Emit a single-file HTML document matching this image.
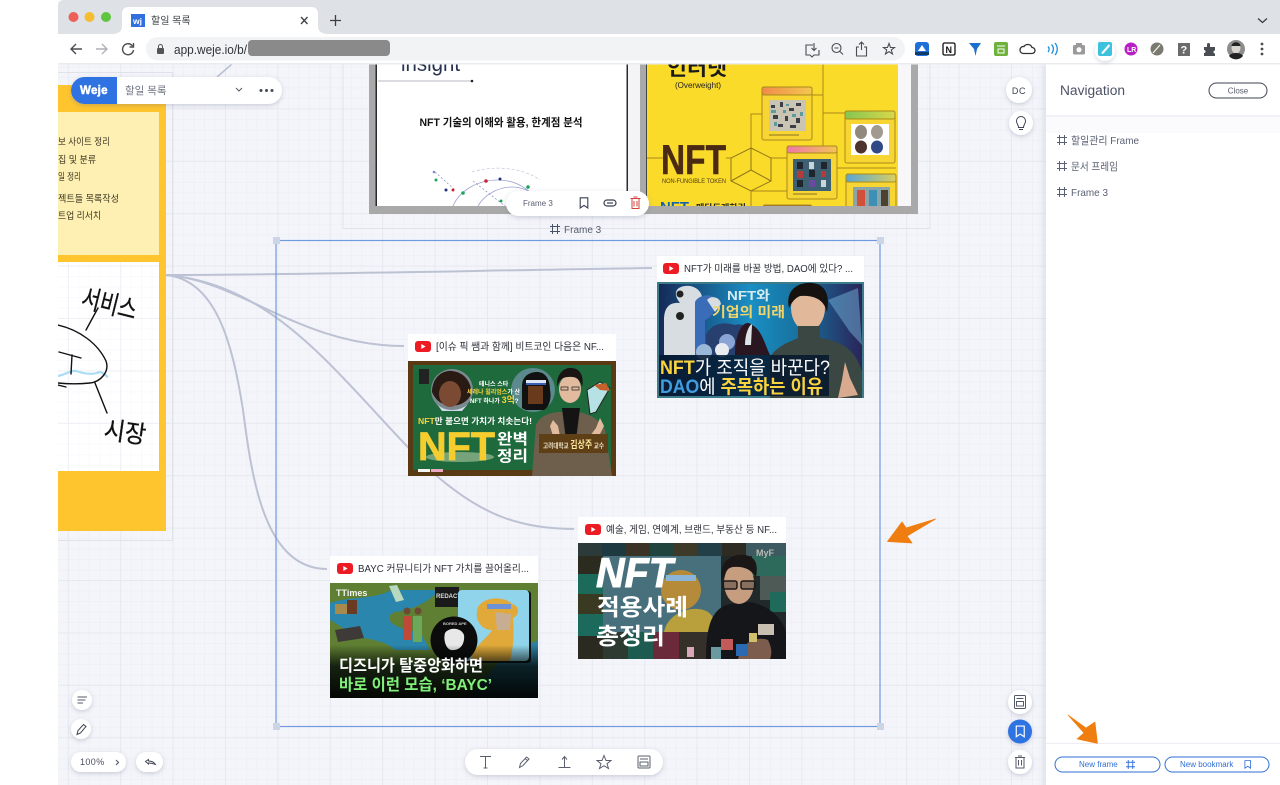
<!DOCTYPE html>
<html><head><meta charset="utf-8"><title>할일 목록</title>
<style>
html,body{margin:0;padding:0;background:#fff;width:1280px;height:785px;overflow:hidden}
svg{display:block;position:absolute;left:0;top:0;filter:blur(.35px)}
text{font-family:"Liberation Sans","Noto Sans CJK KR",sans-serif}
</style></head><body>
<svg width="1280" height="785" viewBox="0 0 1280 785" xmlns="http://www.w3.org/2000/svg">
<defs>
<pattern id="mn" x="15.4" y="3.6" width="10.48" height="10.48" patternUnits="userSpaceOnUse"><path d="M.5 0V10.48M0 .5H10.48" stroke="#eff0f6" fill="none"/></pattern>
<pattern id="mj" x="15.4" y="3.6" width="52.4" height="52.4" patternUnits="userSpaceOnUse"><path d="M.5 0V52.4M0 .5H52.4" stroke="#e7e9f1" fill="none"/></pattern>
<filter id="sh" x="-30%" y="-50%" width="160%" height="220%"><feDropShadow dx="0" dy="1.5" stdDeviation="2.5" flood-color="#5a6080" flood-opacity=".28"/></filter>
<filter id="ps" x="-10%" y="-5%" width="115%" height="110%"><feDropShadow dx="-1" dy="0" stdDeviation="4" flood-color="#5a6080" flood-opacity=".2"/></filter>
<symbol id="fr" viewBox="0 0 10 10"><path d="M2.5 0V10M7.5 0V10M0 2.5H10M0 7.5H10" fill="none" stroke="currentColor" stroke-width="1"/></symbol>
<symbol id="bm" viewBox="0 0 10 12"><path d="M1.2 .8H8.8V11L5 8.4 1.2 11Z" fill="none" stroke="currentColor" stroke-width="1.1"/></symbol>
<symbol id="yt" viewBox="0 0 16 11"><rect width="16" height="11" rx="3" fill="#ed1c24"/><path d="M6.3 3V8L10.6 5.5Z" fill="#fff"/></symbol>
<linearGradient id="gb" x1="0" x2="1" y1="0" y2="0"><stop offset="0" stop-color="#152a58"/><stop offset=".45" stop-color="#1a8fc4"/><stop offset=".7" stop-color="#176f9c"/><stop offset="1" stop-color="#2a2458"/></linearGradient>
<linearGradient id="wo" x1="0" x2="1"><stop offset="0" stop-color="#f08b4b"/><stop offset="1" stop-color="#f5c74f"/></linearGradient>
<linearGradient id="wg" x1="0" x2="1"><stop offset="0" stop-color="#86c551"/><stop offset="1" stop-color="#d8d84a"/></linearGradient>
<linearGradient id="wp" x1="0" x2="1"><stop offset="0" stop-color="#ee78a8"/><stop offset="1" stop-color="#f4c455"/></linearGradient>
<linearGradient id="wb" x1="0" x2="1"><stop offset="0" stop-color="#5aa6d8"/><stop offset="1" stop-color="#d9cf60"/></linearGradient>
<linearGradient id="dk" x1="0" x2="0" y1="0" y2="1"><stop offset="0" stop-color="#000" stop-opacity="0"/><stop offset=".4" stop-color="#020a08" stop-opacity=".8"/><stop offset="1" stop-color="#000" stop-opacity=".95"/></linearGradient>
<clipPath id="c1"><rect x="657" y="282" width="207" height="116"/></clipPath>
<clipPath id="c2"><rect x="408" y="361" width="208" height="115"/></clipPath>
<clipPath id="c3"><rect x="578" y="543" width="208" height="116"/></clipPath>
<clipPath id="c4"><rect x="330" y="583" width="208" height="115"/></clipPath>
<clipPath id="top"><rect x="58" y="64" width="1222" height="721"/></clipPath>
<clipPath id="slides"><rect x="360" y="64" width="570" height="142"/></clipPath>
</defs>

<!-- canvas -->
<rect x="58" y="64" width="1222" height="721" fill="#f4f5fa"/>
<rect x="58" y="64" width="1222" height="721" fill="url(#mn)"/>
<rect x="58" y="64" width="1222" height="721" fill="url(#mj)"/>

<g clip-path="url(#top)">
<!-- upper frames -->
<rect x="343" y="50" width="587" height="178.500" fill="none" stroke="#e0e2ea"/>
<rect x="50" y="72.500" width="122.500" height="468" fill="none" stroke="#e0e2ea"/>
<path d="M232 64 217 77" stroke="#b9bfd2" stroke-width="1.500" fill="none"/>

<!-- slides -->
<rect x="369" y="50" width="549" height="164" fill="#a9a9a9"/>
<rect x="375.500" y="50" width="252.500" height="156" fill="#2b2b2b"/>
<rect x="377" y="50" width="249.500" height="156" fill="#fff"/>
<rect x="628" y="50" width="12" height="156" fill="#f4f4f6"/>
<rect x="646" y="50" width="1.500" height="156" fill="#444"/>
<rect x="647" y="50" width="251" height="156" fill="#fadb2a"/>
<rect x="898" y="50" width="13" height="156" fill="#f7f7f9"/>
<g clip-path="url(#slides)">
<text x="401" y="71" font-size="22" fill="#26324f" textLength="59" lengthAdjust="spacingAndGlyphs">insight</text>
<path d="M378 81H472" stroke="#b4b8c4"/><circle cx="472" cy="81" r="1.300" fill="#222"/>
<text x="501" y="126" font-size="11" font-weight="700" fill="#111" text-anchor="middle" textLength="163" lengthAdjust="spacingAndGlyphs">NFT 기술의 이해와 활용, 한계점 분석</text>
<path d="M453 206C460 190 478 180 498 180 512 180 525 186 535 197M478 206C484 195 498 187 512 187 520 187 528 190 533 194" fill="none" stroke="#9fa5cf" stroke-width=".8"/>
<path d="M435 172 455 190M473 181 505 206" stroke="#8288c4" stroke-width=".7" stroke-dasharray="2 2" fill="none"/>
<path d="M472 172C490 166 520 166 540 180" stroke="#c9cbdd" stroke-width=".8" stroke-dasharray="3 2" fill="none"/>
<g><circle cx="434" cy="172" r="1.300" fill="#8288c4"/><circle cx="436" cy="180" r="1.500" fill="#1fa35b"/><circle cx="453" cy="190" r="1.500" fill="#c8243a"/><circle cx="446" cy="190" r="1.500" fill="#23307f"/><circle cx="463" cy="193" r="1.800" fill="#1fa35b"/><circle cx="486" cy="181" r="1.800" fill="#c8243a"/><circle cx="500" cy="179" r="1.500" fill="#23307f"/><circle cx="528" cy="187" r="1.800" fill="#1fa35b"/><circle cx="501" cy="201" r="1.500" fill="#1fa35b"/></g>

<text x="667" y="75" font-size="21" font-weight="700" fill="#1a1a1a" textLength="60" lengthAdjust="spacingAndGlyphs">인터넷</text>
<text x="675" y="88" font-size="8.500" fill="#222" textLength="46" lengthAdjust="spacingAndGlyphs">(Overweight)</text>
<g fill="none" stroke="#a98a1b" stroke-width="1">
<path d="M823 64V146M823 113H845M823 95H812M751 148V114H762M771 158H787M647 158H664M726 158H731M751 191V206M837 168H896M751 191H787"/>
<path d="M751 148 771 158V181L751 191 731 181V158ZM731 181 751 170 771 181M751 170V148" stroke="#8f7518"/>
</g>
<text x="661" y="174" font-size="42" font-weight="700" fill="#4b2a14" stroke="#4b2a14" stroke-width=".5" textLength="65" lengthAdjust="spacingAndGlyphs">NFT</text>
<text x="662" y="183" font-size="6.500" fill="#4b3a18" textLength="64" lengthAdjust="spacingAndGlyphs">NON-FUNGIBLE TOKEN</text>
<text x="660" y="212" font-size="15" font-weight="700" fill="#1464b0" textLength="29" lengthAdjust="spacingAndGlyphs">NFT</text>
<text x="696" y="210" font-size="8" font-weight="700" fill="#222" textLength="50" lengthAdjust="spacingAndGlyphs">메타도래하리</text>
<!-- windows -->
<g stroke="#a98a1b" stroke-width="1">
<rect x="762" y="87" width="50" height="53" rx="2" fill="#f7d634"/><rect x="762" y="87" width="50" height="8" rx="2" fill="url(#wo)"/>
<rect x="845" y="111" width="50" height="52" rx="2" fill="#f7d634"/><rect x="845" y="111" width="50" height="8" rx="2" fill="url(#wg)"/>
<rect x="787" y="146" width="50" height="53" rx="2" fill="#f7d634"/><rect x="787" y="146" width="50" height="7" rx="2" fill="url(#wp)"/>
<rect x="846" y="174" width="50" height="40" rx="2" fill="#f7d634"/><rect x="846" y="174" width="50" height="8" rx="2" fill="url(#wb)"/>
<rect x="763" y="205" width="49" height="10" rx="2" fill="#a06a3a"/>
</g>
<rect x="769" y="100" width="37" height="31" fill="#c9c4b4"/>
<path d="M771 105h4v3h-4zM780 102h3v5h-3zM789 108h5v3h-5zM773 115h5v4h-5zM785 116h3v5h-3zM796 103h5v3h-5zM796 118h4v5h-4zM778 124h5v3h-5zM790 125h6v3h-6z" fill="#3c3f45"/>
<path d="M771 110h5v3h-5zM783 110h3v3h-3zM792 114h4v3h-4zM774 122h3v4h-3zM800 112h3v4h-3zM786 104h3v2h-3z" fill="#5d9aa0"/>
<rect x="769" y="134" width="30" height="2" fill="#c1a22a"/>
<rect x="851" y="124" width="38" height="31" fill="#fff"/>
<ellipse cx="861" cy="132" rx="6" ry="7" fill="#90897e"/><ellipse cx="877" cy="132" rx="6" ry="7" fill="#a09a90"/><ellipse cx="861" cy="147" rx="6" ry="6.500" fill="#4e342c"/><ellipse cx="877" cy="147" rx="6" ry="6.500" fill="#2f4a86"/>
<rect x="793" y="159" width="38" height="32" fill="#3d6072"/>
<g fill="#20242c"><rect x="797" y="162" width="6" height="7"/><rect x="809" y="170" width="6" height="7"/><rect x="821" y="162" width="6" height="7"/><rect x="797" y="180" width="6" height="7"/></g>
<g fill="#c9d6d8"><rect x="809" y="162" width="5" height="7"/><rect x="821" y="180" width="5" height="7"/></g>
<g fill="#b53a3a"><rect x="797" y="171" width="6" height="7"/><rect x="821" y="171" width="5" height="6"/></g>
<rect x="809" y="180" width="6" height="7" fill="#6a4aa0"/>
<rect x="793" y="193" width="24" height="2" fill="#c1a22a"/>
<rect x="853" y="187" width="37" height="20" fill="#8aa4a8"/>
<rect x="857" y="190" width="8" height="18" fill="#d2503a"/><rect x="869" y="190" width="8" height="18" fill="#3d8fb5"/><rect x="881" y="190" width="7" height="18" fill="#50402f"/>
</g>
<rect x="647" y="206" width="251" height="8" fill="#a9a9a9"/>

<!-- sticky -->
<rect x="58" y="85" width="108" height="446" fill="#fec52e"/>
<rect x="58" y="112" width="101" height="143" fill="#fdf0b2"/>
<g font-size="9.500" fill="#3a3520">
<text x="58" y="145" textLength="52" lengthAdjust="spacingAndGlyphs">보 사이트 정리</text>
<text x="58" y="163" textLength="38" lengthAdjust="spacingAndGlyphs">집 및 분류</text>
<text x="58" y="180" textLength="23" lengthAdjust="spacingAndGlyphs">일 정리</text>
<text x="58" y="202" textLength="61" lengthAdjust="spacingAndGlyphs">젝트들 목록작성</text>
<text x="58" y="219" textLength="43" lengthAdjust="spacingAndGlyphs">트업 리서치</text>
</g>
<rect x="58" y="262" width="101" height="209" fill="#fff"/>
<rect x="58" y="262" width="101" height="209" fill="url(#mn)" opacity=".35"/>
<rect x="58" y="262" width="101" height="209" fill="url(#mj)" opacity=".6"/>
<path d="M58 376C65 375 70 370 76 371 82 373 90 375 97 373 102 370 104 375 108 377" stroke="#a8dcf5" stroke-width="2.200" fill="none"/>
<g stroke="#111" stroke-width="1.400" fill="none" stroke-linecap="round">
<path d="M58 325C80 330 98 344 106 361 110 372 100 382 90 383 80 384 68 384 58 383"/>
<path d="M98 308 86 330M95 383 107 413M59 352 81 358M72 355 71 374M58 385 66 387"/>
</g>
<text x="80" y="306" font-size="26" fill="#111" stroke="#111" stroke-width=".3" transform="rotate(14 80 306)" textLength="56" lengthAdjust="spacingAndGlyphs">서비스</text>
<text x="103" y="438" font-size="25" fill="#111" stroke="#111" stroke-width=".3" transform="rotate(8 103 438)" textLength="42" lengthAdjust="spacingAndGlyphs">시장</text>

<!-- connectors -->
<g fill="none" stroke="#bcc2d4" stroke-width="2">
<path d="M166 275C300 275 500 270 652 268"/>
<path d="M166 275C240 280 300 346 404 346"/>
<path d="M166 275C280 285 340 380 430 470 480 515 520 529 574 529"/>
<path d="M166 275C215 280 232 340 243 410 252 480 265 569 327 569"/>
</g>

<!-- frame 3 selection -->
<rect x="276" y="240.500" width="604" height="486" fill="none" stroke="#6f9ae0" stroke-width="1.200"/>
<g fill="#ccd5e6"><rect x="273" y="237" width="7" height="7"/><rect x="877" y="237" width="7" height="7"/><rect x="273" y="723" width="7" height="7"/><rect x="877" y="723" width="7" height="7"/></g>
<use href="#fr" x="550" y="224" width="10" height="10" color="#4c5266"/>
<text x="564" y="233" font-size="10" fill="#555b6e">Frame 3</text>

<!-- Card 1 -->
<rect x="657" y="256" width="207" height="26" fill="#fff"/>
<use href="#yt" x="663" y="263" width="16" height="11"/>
<text x="684" y="272" font-size="10" fill="#2c2f38" textLength="169" lengthAdjust="spacingAndGlyphs">NFT가 미래를 바꿀 방법, DAO에 있다? ...</text>
<g clip-path="url(#c1)">
<rect x="657" y="282" width="207" height="116" fill="#3c7b8a"/>
<rect x="659" y="284" width="203" height="112" fill="url(#gb)"/>
<path d="M664 355V320C664 305 672 302 680 303 670 290 680 285 690 286 702 288 705 300 700 306V355Z" fill="#d7dde0"/>
<circle cx="680" cy="316" r="4" fill="#222"/><circle cx="680" cy="294" r="3.500" fill="#222"/>
<path d="M695 355V302C698 295 712 292 716 300 718 306 712 318 705 320V355Z" fill="#3a6cb8"/>
<path d="M707 300a8 8 0 0 1 14 4l-6 8z" fill="#d7dde0"/>
<path d="M706 355V335C712 322 725 322 735 325 745 322 755 330 762 355Z" fill="#27406f"/>
<circle cx="727" cy="342" r="8" fill="#8aa5d5"/>
<path d="M735 355C735 330 745 318 752 325 762 330 765 345 770 355Z" fill="#2a1620"/>
<path d="M745 345C745 330 752 322 752 325L751 345Z" fill="#dde3e6"/>
<circle cx="704" cy="352" r="8" fill="#9ab8d8"/><circle cx="722" cy="350" r="7" fill="#e8ecf0"/>
<path d="M770 357C778 345 790 342 798 338L822 338C838 342 855 346 862 372V398H770Z" fill="#3a4742"/>
<ellipse cx="808" cy="308" rx="17" ry="23" fill="#e2b89b"/>
<path d="M789 308C785 290 798 282 812 283 826 284 830 296 827 312 824 300 815 295 800 296 795 298 792 302 789 308Z" fill="#16120f"/>
<rect x="798" y="326" width="22" height="14" fill="#3a4742"/>
<path d="M850 332 828 300 858 288 862 345Z" fill="#6ea8d0" opacity=".55"/>
<rect x="659" y="355" width="170" height="41" fill="#06182e" opacity=".85"/>
<text x="727" y="300" font-size="13" font-weight="700" fill="#d6ecf0" textLength="43" lengthAdjust="spacingAndGlyphs">NFT와</text>
<text x="712" y="317" font-size="14" font-weight="700" fill="#f2d56a" textLength="73" lengthAdjust="spacingAndGlyphs">기업의 미래</text>
<text x="660" y="374" font-size="19" fill="#fff" textLength="170" lengthAdjust="spacingAndGlyphs"><tspan fill="#fbd33f" font-weight="700">NFT</tspan>가 조직을 바꾼다?</text>
<text x="660" y="393" font-size="19" font-weight="700" fill="#fff" textLength="163" lengthAdjust="spacingAndGlyphs"><tspan fill="#3f9de0">DAO</tspan><tspan font-weight="400">에</tspan> <tspan fill="#fbd33f">주목하는 이유</tspan></text>
<path d="M838 398 842 380 845 362 850 378 858 395Z" fill="#d8ab90"/>
</g>

<!-- Card 2 -->
<rect x="408" y="334" width="208" height="27" fill="#fff"/>
<use href="#yt" x="415" y="341" width="16" height="11"/>
<text x="436" y="350" font-size="10" fill="#2c2f38" textLength="168" lengthAdjust="spacingAndGlyphs">[이슈 픽 쌤과 함께] 비트코인 다음은 NF...</text>
<g clip-path="url(#c2)">
<rect x="408" y="361" width="208" height="115" fill="#5a3a14"/>
<rect x="413" y="365" width="198" height="105" fill="#1f6a3d"/>
<rect x="419" y="369" width="10" height="15" fill="#222"/>
<circle cx="452" cy="390" r="21" fill="#7c8a90"/>
<path d="M432 392C432 378 442 370 452 371 464 372 472 382 471 394 466 408 440 412 432 392Z" fill="#2a1a14"/>
<ellipse cx="450" cy="394" rx="11" ry="13" fill="#7a4a33"/>
<path d="M437 404C444 412 460 412 468 404L462 411H442Z" fill="#cfd8e8"/>
<circle cx="533" cy="390" r="22" fill="#5c8a8c"/>
<path d="M522 408V386C522 376 530 372 537 372 546 372 550 380 550 390 552 400 548 408 544 410L526 410Z" fill="#111"/>
<rect x="526" y="380" width="20" height="4" fill="#dde6f5"/><rect x="526" y="383" width="20" height="2" fill="#3c5fb5"/>
<rect x="528" y="386" width="15" height="18" fill="#6a3a1c"/>
<text x="479" y="386" font-size="6" font-weight="700" fill="#fff">테니스 스타</text>
<text x="467" y="394" font-size="6" font-weight="700" fill="#fff"><tspan fill="#f6d23a">세레나 윌리엄스</tspan>가 산</text>
<text x="470" y="403" font-size="6" font-weight="700" fill="#fff">NFT 하나가 <tspan font-size="9" fill="#f6d23a">3억</tspan>?</text>
<path d="M587 390 600 382 610 388 604 398 596 412 590 414Z" fill="#b6e2e6" stroke="#222"/>
<path d="M594 385 606 383 610 391 600 390Z" fill="#c8622a"/>
<path d="M532 476 536 425C540 415 552 412 562 412H578C590 414 600 420 605 430L612 476Z" fill="#6e5f4c"/>
<path d="M562 408H580L576 440H566Z" fill="#141414"/>
<ellipse cx="570" cy="389" rx="11" ry="14" fill="#e2bb9e"/>
<path d="M557 387C556 373 565 367 572 368 582 369 584 379 582 387 580 379 576 376 568 377 562 377 559 381 557 387Z" fill="#1a1512"/>
<path d="M561 387h7v3h-7zM572 387h7v3h-7z" fill="none" stroke="#222" stroke-width=".7"/>
<path d="M553 420 550 426 553 436 560 436 558 426ZM600 418 596 428 590 436 598 438 604 426Z" fill="#e2bb9e"/>
<rect x="539" y="434" width="69" height="19" fill="#5e3f16"/>
<text x="543" y="448" font-size="7" font-weight="700" fill="#e8e0c8" textLength="61" lengthAdjust="spacingAndGlyphs">고려대학교 <tspan font-size="10" fill="#ffe8a0">김상주</tspan> 교수</text>
<text x="418" y="424" font-size="8.500" font-weight="700" fill="#fff" textLength="114" lengthAdjust="spacingAndGlyphs"><tspan fill="#f6d23a">NFT</tspan>만 붙으면 가치가 치솟는다!</text>
<ellipse cx="460" cy="457" rx="34" ry="5" fill="#8db28b" opacity=".8"/>
<text x="418" y="460" font-size="40" font-weight="700" fill="#f6cd2e" stroke="#f6cd2e" stroke-width=".8" textLength="77" lengthAdjust="spacingAndGlyphs">NFT</text>
<text x="497" y="444" font-size="15" font-weight="700" fill="#fff" textLength="31" lengthAdjust="spacingAndGlyphs">완벽</text>
<text x="497" y="461" font-size="15" font-weight="700" fill="#fff" textLength="31" lengthAdjust="spacingAndGlyphs">정리</text>
<rect x="418" y="469" width="12" height="3" fill="#f4f4f4"/><rect x="431" y="469" width="12" height="3" fill="#eba8c2"/>
</g>

<!-- Card 3 -->
<rect x="578" y="517" width="208" height="26" fill="#fff"/>
<use href="#yt" x="585" y="524" width="16" height="11"/>
<text x="606" y="533" font-size="10" fill="#2c2f38" textLength="171" lengthAdjust="spacingAndGlyphs">예술, 게임, 연예계, 브랜드, 부동산 등 NF...</text>
<g clip-path="url(#c3)">
<rect x="578" y="543" width="208" height="116" fill="#22292a"/>
<g>
<rect x="578" y="543" width="24" height="13" fill="#2d3a3a"/><rect x="602" y="543" width="24" height="13" fill="#1e3a40"/><rect x="626" y="543" width="24" height="13" fill="#3a3326"/><rect x="650" y="543" width="24" height="13" fill="#22443f"/><rect x="674" y="543" width="24" height="13" fill="#3e3a2a"/><rect x="698" y="543" width="24" height="13" fill="#223f48"/><rect x="722" y="543" width="24" height="13" fill="#2e2c22"/><rect x="746" y="543" width="40" height="13" fill="#3d5a60"/>
<rect x="578" y="556" width="25" height="18" fill="#2b2b20"/><rect x="578" y="574" width="25" height="20" fill="#1b6a5a"/><rect x="578" y="594" width="25" height="20" fill="#3a3a22"/><rect x="578" y="614" width="25" height="22" fill="#1c6a5c"/><rect x="578" y="636" width="25" height="23" fill="#2a2a20"/>
<rect x="603" y="556" width="118" height="76" fill="#48707c"/>
<ellipse cx="681" cy="590" rx="20" ry="20" fill="#b58b3a"/>
<path d="M664 632C668 612 694 604 708 612 716 618 716 626 714 632Z" fill="#b9a03c"/>
<rect x="666" y="575" width="30" height="6" fill="#8bb5d8"/>
<rect x="603" y="632" width="25" height="27" fill="#2c3a32"/><rect x="628" y="632" width="25" height="27" fill="#1d5a50"/><rect x="653" y="632" width="26" height="27" fill="#6a2a3a"/><rect x="679" y="632" width="30" height="27" fill="#36302a"/>
<rect x="752" y="556" width="34" height="20" fill="#2d6a5c"/><rect x="760" y="576" width="26" height="24" fill="#4d5a55"/><rect x="770" y="592" width="16" height="20" fill="#206a5c"/>
</g>
<path d="M706 659C706 625 712 608 730 604L750 602C770 606 782 618 786 632V659Z" fill="#14161a"/>
<ellipse cx="739" cy="583" rx="15" ry="21" fill="#c79d80"/>
<path d="M722 582C717 562 732 553 745 555 757 557 758 566 756 578 752 570 745 566 733 567 726 568 725 574 722 582Z" fill="#1b1716"/>
<rect x="723" y="581" width="14" height="8" rx="2" fill="#2a2a2a" fill-opacity=".4" stroke="#1a1a1a" stroke-width="1.500"/><rect x="741" y="581" width="14" height="8" rx="2" fill="#2a2a2a" fill-opacity=".4" stroke="#1a1a1a" stroke-width="1.500"/>
<path d="M738 659C742 642 756 636 768 640 772 648 772 654 770 659Z" fill="#7c5c4c"/>
<rect x="758" y="624" width="16" height="11" fill="#c9bfb0"/><rect x="749" y="633" width="8" height="9" fill="#d0c06a"/><rect x="721" y="639" width="12" height="11" fill="#c25a5a"/><rect x="736" y="644" width="12" height="12" fill="#2a6ab0"/><rect x="711" y="647" width="10" height="12" fill="#6a9aa0"/><rect x="687" y="647" width="7" height="10" fill="#d8a8b8"/>
<text x="756" y="556" font-size="9" font-weight="700" fill="#b4bcb4">MyF</text>
<text x="596" y="587" font-size="42" font-weight="700" font-style="italic" fill="#fff" stroke="#fff" stroke-width="1" textLength="77" lengthAdjust="spacingAndGlyphs">NFT</text>
<text x="597" y="615" font-size="23" font-weight="700" fill="#fff" textLength="91" lengthAdjust="spacingAndGlyphs">적용사례</text>
<text x="596" y="644" font-size="23" font-weight="700" fill="#fff" textLength="69" lengthAdjust="spacingAndGlyphs">총정리</text>
</g>

<!-- Card 4 -->
<rect x="330" y="556" width="208" height="27" fill="#fff"/>
<use href="#yt" x="337" y="563" width="16" height="11"/>
<text x="358" y="572" font-size="10" fill="#2c2f38" textLength="171" lengthAdjust="spacingAndGlyphs">BAYC 커뮤니티가 NFT 가치를 끌어올리...</text>
<g clip-path="url(#c4)">
<rect x="330" y="583" width="208" height="115" fill="#5f7f32"/>
<path d="M330 603C350 596 372 600 392 590L440 590C425 605 410 610 395 612 380 618 395 630 420 632L430 650H395C385 640 370 640 355 636 345 630 338 624 330 620Z" fill="#2b86ae"/>
<path d="M500 660 538 640V698H470Z" fill="#2f7fa0"/>
<rect x="335" y="604" width="17" height="10" fill="#a88b4c"/><rect x="347" y="600" width="10" height="14" fill="#6b3a22"/>
<path d="M335 630 360 626 364 638 338 642Z" fill="#3d3a38"/>
<path d="M389 586 397 585 404 600 396 602Z" fill="#b8d8c0"/>
<rect x="403" y="616" width="9" height="24" fill="#c04a3a"/><rect x="413" y="616" width="9" height="26" fill="#6ca85a"/><circle cx="407" cy="611" r="3.500" fill="#6a4a32"/><circle cx="418" cy="611" r="3.500" fill="#6a4a32"/>
<rect x="435" y="587" width="24" height="20" fill="#1a1a1a"/>
<text x="436" y="598" font-size="6" font-weight="700" fill="#ddd">REDACTI</text>
<rect x="460" y="591" width="71" height="72" rx="3" fill="#111"/>
<rect x="458" y="590" width="71" height="71" rx="4" fill="#8fd4ea"/>
<path d="M470 661C474 645 486 640 492 630 480 630 474 618 478 607 484 596 505 596 512 604 520 606 520 615 513 618 514 632 514 645 510 661Z" fill="#e0a93a"/>
<rect x="487" y="604" width="24" height="5" fill="#6c93d8"/>
<path d="M495 612 511 614 510 630 497 630Z" fill="#c7ae92"/>
<circle cx="454" cy="640" r="23.500" fill="#0c0c0c"/>
<path d="M445 633C449 627 461 627 464 635 465 643 461 651 451 650 446 649 443 640 445 633Z" fill="#e8e8e8"/>
<text x="443" y="625" font-size="4" font-weight="700" fill="#ccc">BORED APE</text>
<rect x="330" y="645" width="208" height="53" fill="url(#dk)"/>
<text x="336" y="596" font-size="9" font-weight="700" fill="#f4f4f4">TTimes</text>
<text x="339" y="671" font-size="16" font-weight="700" fill="#fff" textLength="144" lengthAdjust="spacingAndGlyphs">디즈니가 탈중앙화하면</text>
<text x="339" y="690" font-size="16" font-weight="700" fill="#80f07a" textLength="153" lengthAdjust="spacingAndGlyphs">바로 이런 모습, ‘BAYC’</text>
</g>

<!-- orange arrows -->
<path d="M935.500 519 906 528 902 522 887.500 541.500 912 543 907 536Z" fill="#f07d0f" stroke="#f07d0f" stroke-width=".8" stroke-linejoin="round"/>

<!-- floating UI -->
<rect x="506" y="191" width="143" height="25" rx="12.500" fill="#fff" filter="url(#sh)"/>
<text x="523" y="206" font-size="8" fill="#5b6072">Frame 3</text>
<use href="#bm" x="579" y="197" width="10" height="12" color="#3a3f50"/>
<g fill="none" stroke="#3a3f50" stroke-width="1.200"><rect x="604" y="200" width="12" height="6" rx="3"/><path d="M607 203H613"/></g>
<g fill="none" stroke="#d2413a" stroke-width="1"><path d="M630.500 198.500H640.500M632 198.500V208.500H639V198.500M633.500 197H637.500M634 201V206.500M637 201V206.500"/></g>

<rect x="71" y="77" width="211" height="27" rx="13.500" fill="#fff" filter="url(#sh)"/>
<path d="M117 77H84.500A13.500 13.500 0 0 0 84.500 104H117Z" fill="#2f73e2"/>
<text x="80" y="94" font-size="11.500" font-weight="700" fill="#fff" stroke="#fff" stroke-width=".5" letter-spacing=".3">Weje</text>
<text x="125" y="94" font-size="10.500" fill="#6f7482">할일 목록</text>
<path d="M236 88 239 91 242 88" fill="none" stroke="#555a68" stroke-width="1"/>
<g fill="#444957"><circle cx="261" cy="90.500" r="1.500"/><circle cx="266.500" cy="90.500" r="1.500"/><circle cx="272" cy="90.500" r="1.500"/></g>

<circle cx="1019" cy="90" r="13" fill="#fff" filter="url(#sh)"/>
<text x="1019" y="94" font-size="9" fill="#3e4352" text-anchor="middle" letter-spacing=".6">DC</text>
<circle cx="1021" cy="123" r="12" fill="#fff" filter="url(#sh)"/>
<path d="M1018.500 127.500C1018.500 124.500 1016.500 124 1016.500 121A4.500 4.500 0 0 1 1025.500 121C1025.500 124 1023.500 124.500 1023.500 127.500ZM1019 129.500H1023" fill="none" stroke="#3e4352" stroke-width="1"/>

<!-- bottom-left -->
<ellipse cx="82" cy="700" rx="10" ry="10" fill="#fff" filter="url(#sh)"/>
<path d="M77.500 697H87M77.500 700H85.500M77.500 703H83" stroke="#555a68" stroke-width="1"/>
<circle cx="81" cy="729" r="10" fill="#fff" filter="url(#sh)"/>
<path d="M77 734.500 78 730.500 83.500 724.500 86 726.500 80.500 733Z" fill="none" stroke="#3e4352" stroke-width="1"/>
<rect x="71" y="752" width="55" height="20" rx="10" fill="#fff" filter="url(#sh)"/>
<text x="80" y="765" font-size="9" fill="#4a4f5e" letter-spacing=".4">100%</text>
<path d="M116 760 118.500 762.500 116 765" fill="none" stroke="#4a4f5e"/>
<rect x="136" y="752" width="27" height="20" rx="10" fill="#fff" filter="url(#sh)"/>
<path d="M145.500 761.500 148.500 759.500V761C151.500 761 154 762 155.500 764.500 153 763.500 151 763 148.500 763V764Z" fill="none" stroke="#3e4352" stroke-width=".9"/>

<rect x="465" y="749" width="198" height="26" rx="13" fill="#fff" filter="url(#sh)"/>
<g fill="none" stroke="#5a5f6e" stroke-width="1">
<path d="M480 756.500H491M485.500 756.500V768M483.500 768H487.500"/>
<path d="M519.500 767.500 520.500 763.500 526.500 757 529 759 523 765.500ZM525 758.500 527.500 760.500"/>
<path d="M564.500 767V757M562 759.500 564.500 756.500 567 759.500M558.500 767.500H570.500"/>
<path d="M604 755.500 606 760.500H611L607 763.700 608.500 768.500 604 765.700 599.500 768.500 601 763.700 597 760.500H602Z"/>
<rect x="638" y="756" width="12" height="12" rx="1"/><path d="M640 759H648M640 762H648V766H640Z"/>
</g>

<!-- side buttons -->
<circle cx="1020" cy="702" r="12" fill="#fff" filter="url(#sh)"/>
<g fill="none" stroke="#555a68" stroke-width="1"><rect x="1014.500" y="695.500" width="11" height="13" rx="1"/><path d="M1016.500 698.500H1023.500M1016.500 701.500H1023.500V706H1016.500Z"/></g>
<circle cx="1020" cy="731.500" r="12" fill="#2f73e2" filter="url(#sh)"/>
<use href="#bm" x="1015" y="725" width="10.500" height="13" color="#fff"/>
<circle cx="1020" cy="762" r="12" fill="#fff" filter="url(#sh)"/>
<g fill="none" stroke="#555a68" stroke-width="1"><path d="M1015 757.500H1025M1016 757.500V768H1024V757.500M1018 756H1022M1018.500 760V765.500M1021.500 760V765.500"/></g>

<!-- right panel -->
<rect x="1046" y="64" width="240" height="730" fill="#fff" filter="url(#ps)"/>
<rect x="1046" y="115" width="234" height="2" fill="#f0f1f6"/>
<rect x="1046" y="117" width="234" height="16" fill="#fbfbfd"/>
<text x="1060" y="95" font-size="13.500" fill="#4c5266" textLength="65" lengthAdjust="spacingAndGlyphs">Navigation</text>
<rect x="1209" y="83" width="58" height="15" rx="7.500" fill="#fff" stroke="#3e4352"/>
<text x="1238" y="93.500" font-size="8" fill="#555a68" text-anchor="middle">Close</text>
<use href="#fr" x="1057" y="135" width="10" height="10" color="#596073"/>
<text x="1071" y="144" font-size="10.500" fill="#596073" textLength="68" lengthAdjust="spacingAndGlyphs">할일관리 Frame</text>
<use href="#fr" x="1057" y="161" width="10" height="10" color="#596073"/>
<text x="1071" y="170" font-size="10.500" fill="#596073" textLength="47" lengthAdjust="spacingAndGlyphs">문서 프레임</text>
<use href="#fr" x="1057" y="187" width="10" height="10" color="#596073"/>
<text x="1071" y="196" font-size="10.500" fill="#596073" textLength="37" lengthAdjust="spacingAndGlyphs">Frame 3</text>
<rect x="1046" y="743" width="234" height="1" fill="#eceef4"/>
<rect x="1055" y="757" width="105" height="15" rx="7.500" fill="#fff" stroke="#2f6fd6"/>
<text x="1079" y="767" font-size="8" fill="#2f6fd6">New frame</text>
<use href="#fr" x="1126" y="760" width="9" height="9" color="#2f6fd6"/>
<rect x="1165" y="757" width="104" height="15" rx="7.500" fill="#fff" stroke="#2f6fd6"/>
<text x="1180" y="767" font-size="8" fill="#2f6fd6">New bookmark</text>
<use href="#bm" x="1244" y="760" width="7.500" height="9" color="#2f6fd6"/>
<path d="M1068 715 1086 728 1095 722 1097.500 743.500 1077 739 1084 733Z" fill="#f07d0f" stroke="#f07d0f" stroke-width=".6" stroke-linejoin="round"/>
</g>

<!-- browser chrome -->
<path d="M58 34V6Q58 0 64 0H1280V34Z" fill="#dee1e6"/>
<path d="M112 34Q122 34 122 26V14Q122 7 129 7H311Q318 7 318 14V26Q318 34 328 34Z" fill="#fff"/>
<circle cx="73.500" cy="17" r="5" fill="#ed5f57"/><circle cx="89.500" cy="17" r="5" fill="#f5bd2f"/><circle cx="106" cy="17" r="5" fill="#5fc640"/>
<rect x="131" y="14" width="14" height="13" fill="#2f6fe0"/>
<text x="133" y="24" font-size="8.500" font-weight="700" fill="#fff">wj</text>
<text x="151" y="24" font-size="10" fill="#3c4043">할일 목록</text>
<path d="M301 17 307.500 24M307.500 17 301 24" stroke="#3c4043" stroke-width="1.300"/>
<path d="M335.500 15V26M330 20.500H341" stroke="#3c4043" stroke-width="1.300"/>
<path d="M1258 18.500 1262.500 22.500 1267 18.500" fill="none" stroke="#3c4043" stroke-width="1.300"/>
<rect x="58" y="34" width="1222" height="30" fill="#fff"/>
<rect x="58" y="63" width="1222" height="1.500" fill="#e9ebef"/>
<g fill="none" stroke-width="1.400">
<path d="M82 49H71M76 44 71 49 76 54" stroke="#4a4d52"/>
<path d="M96 49H107M102 44 107 49 102 54" stroke="#aeb1b5"/>
<path d="M132.500 46A5.500 5.500 0 1 0 133.500 50M133.500 43V47H129.500" stroke="#4a4d52"/>
</g>
<rect x="146" y="37" width="759" height="23.500" rx="11.700" fill="#f1f3f4"/>
<rect x="157" y="48" width="7" height="6" rx="1" fill="#555"/><path d="M158.500 48V46.500A2 2 0 0 1 162.500 46.500V48" fill="none" stroke="#555"/>
<text x="174" y="54" font-size="12.500" fill="#303338" textLength="73" lengthAdjust="spacingAndGlyphs">app.weje.io/b/</text>
<rect x="248" y="40" width="142" height="16" rx="4" fill="#8a8a8a"/>
<g fill="none" stroke="#4a4d52" stroke-width="1.100">
<path d="M813 45H806V55H810L812 57 814 55H819V50M814 43V50M811.500 48 814 50.500 816.500 48"/>
<circle cx="836.500" cy="48" r="4.500"/><path d="M840 51.500 843 54.500M834.500 48H838.500"/>
<path d="M859 47H856.500V56H866.500V47H864M861.500 50V42M859 44.500 861.500 42 864 44.500"/>
<path d="M889 43.500 890.500 47.500H894.500L891.300 50 892.500 54 889 51.700 885.500 54 886.700 50 883.500 47.500H887.500Z"/>
</g>
<!-- extensions -->
<rect x="915" y="42" width="14" height="14" rx="3" fill="#1f6fd8"/><path d="M918 51 922 45 926 51Z" fill="#fff"/><rect x="915" y="52" width="14" height="3" fill="#123a6a"/>
<rect x="943" y="43" width="12" height="12" rx="1.500" fill="#fff" stroke="#111" stroke-width="1.300"/>
<text x="945.500" y="53" font-size="9" font-weight="700" fill="#111">N</text>
<path d="M969 43H981L977 49 975.500 56 974 49Z" fill="#1a6fd0"/>
<rect x="994" y="42" width="14" height="14" rx="2" fill="#6fb23b"/><path d="M997 46H1005M998 49H1004V53H998Z" fill="none" stroke="#fff"/>
<path d="M1023 53.500H1032A3 3 0 0 0 1032 47.500 4.500 4.500 0 0 0 1024 46.500 3.500 3.500 0 0 0 1023 53.500Z" fill="none" stroke="#333" stroke-width="1.300"/>
<path d="M1048 46.500C1049.500 48 1049.500 50.500 1048 52M1051.500 44.500C1054 47 1054 51 1051.500 53.500M1055 43C1058 46.500 1058 51.500 1055 55" fill="none" stroke="#1a8fe0" stroke-width="1.300"/>
<rect x="1073" y="45" width="12" height="9.500" rx="1.500" fill="#9a9a9a"/><circle cx="1079" cy="49.800" r="2.500" fill="#fff"/><rect x="1076" y="43" width="6" height="3" fill="#9a9a9a"/>
<circle cx="1105" cy="51" r="10" fill="#fff" opacity=".9" filter="url(#sh)"/>
<rect x="1098" y="42" width="14" height="14" rx="2" fill="#3ec1dd"/><path d="M1101 53 1109 44 1110 46 1103 54Z" fill="#fff"/>
<circle cx="1131" cy="49" r="6.500" fill="#b81fc4"/><text x="1127" y="52" font-size="7" font-weight="700" fill="#fff">LR</text>
<circle cx="1157" cy="49" r="6.500" fill="#7a7b6e"/><path d="M1153 53 1160 45" stroke="#fff"/>
<rect x="1178" y="43" width="12" height="13" fill="#6b6b6b"/><text x="1180.500" y="53.500" font-size="11" font-weight="700" fill="#fff">?</text>
<path d="M1204 47H1207V44.500A1.500 1.500 0 0 1 1210 44.500V47H1215V50.500A1.500 1.500 0 0 0 1215 53.500V56H1204V53A1.500 1.500 0 0 0 1204 50Z" fill="#4a4d52"/>
<circle cx="1236" cy="49" r="9" fill="#8d8d8d"/><ellipse cx="1236" cy="48" rx="4.500" ry="5.500" fill="#d8d4d0"/><path d="M1229 56C1231 52 1241 52 1243 56A9 9 0 0 1 1229 56Z" fill="#222"/><path d="M1231.500 46C1232 41 1240 41 1240.500 46Z" fill="#222"/>
<g fill="#4a4d52"><circle cx="1262" cy="44" r="1.400"/><circle cx="1262" cy="49" r="1.400"/><circle cx="1262" cy="54" r="1.400"/></g>
<rect x="0" y="0" width="58" height="785" fill="#fff"/>
</svg>
</body></html>
